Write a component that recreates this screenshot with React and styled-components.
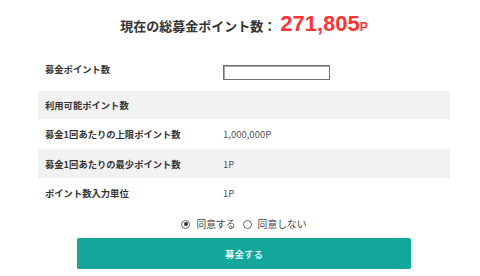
import { useState } from 'react'
import styled, { createGlobalStyle } from 'styled-components'

const GlobalStyle = createGlobalStyle`
  body {
    margin: 0;
    background: #fff;
    font-family: "Noto Sans CJK JP", "Noto Sans", sans-serif;
    color: #333;
  }
`

const Page = styled.div`
  width: 412px;
  margin-left: 38px;
`

const Title = styled.h2`
  height: 46px;
  margin: 0;
  display: flex;
  align-items: baseline;
  justify-content: center;
  padding-top: 11px;
  box-sizing: border-box;
  font-size: 13px;
  font-weight: 700;
  color: #333;
  white-space: nowrap;
`

const Total = styled.span`
  font-family: "Liberation Sans", sans-serif;
  font-size: 22px;
  font-weight: 700;
  color: #fb3535;
  margin-left: 4px;
`

const Unit = styled.span`
  font-family: "Liberation Sans", sans-serif;
  font-size: 12px;
  font-weight: 700;
  color: #fb3535;
`

const Table = styled.div`
  display: flex;
  flex-direction: column;
`

const Row = styled.div`
  display: grid;
  grid-template-columns: 185px 1fr;
  align-items: center;
  height: ${(p) => p.$height || 29}px;
  background: ${(p) => (p.$shaded ? '#f2f2f2' : '#fff')};
`

const Label = styled.div`
  padding-left: 7px;
  font-size: 9.3px;
  font-weight: 700;
  color: #333;
  white-space: nowrap;
`

const Value = styled.div`
  font-size: 9.5px;
  color: #555;
`

const PointInput = styled.input`
  width: 107px;
  height: 15px;
  box-sizing: border-box;
  border: 1px solid #6e6e6e;
  box-shadow: inset 1px 1px 0 #a8a8a8;
  padding: 0 2px;
  font-size: 10px;
  outline: none;
  caret-color: #333;
  margin-top: 1px;
`

const Agreement = styled.div`
  display: flex;
  justify-content: center;
  align-items: center;
  gap: 7px;
  height: 31px;
  padding-top: 3px;
  box-sizing: border-box;
`

const RadioLabel = styled.label`
  display: flex;
  align-items: center;
  gap: 6px;
  font-size: 9.8px;
  color: #444;
  cursor: pointer;
`

const RadioCircle = styled.span`
  width: 9px;
  height: 9px;
  border-radius: 50%;
  border: 1px solid #666;
  box-sizing: border-box;
  display: flex;
  align-items: center;
  justify-content: center;
  background: #fff;

  &::after {
    content: '';
    width: 4px;
    height: 4px;
    border-radius: 50%;
    background: ${(p) => (p.$checked ? '#333' : 'transparent')};
  }
`

const SubmitButton = styled.button`
  display: block;
  width: 334px;
  height: 31px;
  margin: 0 0 0 39px;
  border: none;
  border-radius: 2px;
  background: #14a89d;
  box-shadow: 0 1px 2px rgba(0, 0, 0, 0.2);
  color: #fff;
  font-family: "Noto Sans CJK JP", sans-serif;
  font-size: 9.5px;
  font-weight: 500;
  cursor: pointer;
`

const rows = [
  { label: '利用可能ポイント数', value: '', shaded: true, height: 28 },
  { label: '募金1回あたりの上限ポイント数', value: '1,000,000P', height: 30 },
  { label: '募金1回あたりの最少ポイント数', value: '1P', shaded: true },
  { label: 'ポイント数入力単位', value: '1P' },
]

export default function App() {
  const [agree, setAgree] = useState(true)
  const [points, setPoints] = useState('')

  return (
    <Page>
      <GlobalStyle />
      <Title>
        現在の総募金ポイント数：<Total>271,805</Total>
        <Unit>P</Unit>
      </Title>
      <Table>
        <Row $height={45}>
          <Label>募金ポイント数</Label>
          <div>
            <PointInput autoFocus value={points} onChange={(e) => setPoints(e.target.value)} />
          </div>
        </Row>
        {rows.map((row) => (
          <Row key={row.label} $shaded={row.shaded} $height={row.height}>
            <Label>{row.label}</Label>
            <Value>{row.value}</Value>
          </Row>
        ))}
      </Table>
      <Agreement>
        <RadioLabel onClick={() => setAgree(true)}>
          <RadioCircle $checked={agree} />
          同意する
        </RadioLabel>
        <RadioLabel onClick={() => setAgree(false)}>
          <RadioCircle $checked={!agree} />
          同意しない
        </RadioLabel>
      </Agreement>
      <SubmitButton>募金する</SubmitButton>
    </Page>
  )
}
